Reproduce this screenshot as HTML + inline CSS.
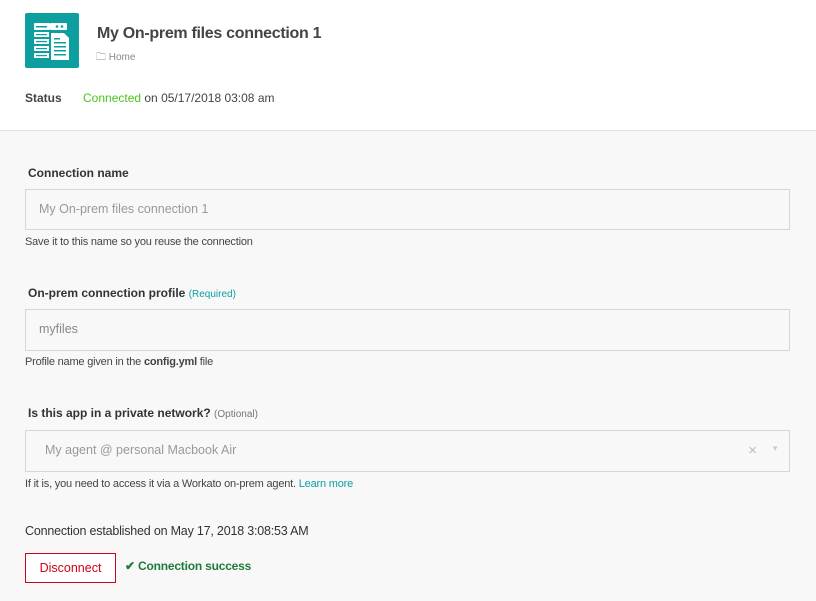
<!DOCTYPE html>
<html><head><style>
body{margin:0;width:816px;height:601px;background:#f8f8f8;font-family:"Liberation Sans",sans-serif;color:#333;position:relative;overflow:hidden}
.top{position:absolute;left:0;top:0;width:816px;height:130px;background:#fff;border-bottom:1px solid #e3e3e3}
.abs{position:absolute;white-space:nowrap}
.lbl{font-size:12px;font-weight:bold;color:#333}
.opt{font-size:10px;font-weight:normal;color:#777}
.inp{position:absolute;left:25px;width:765px;height:39px;border:1px solid #d6d6d6;background:#f8f8f8;box-sizing:border-box;font-size:12.5px;color:#999;padding:12px 0 0 13px}
.help{font-size:11px;color:#444}
</style></head><body>
<div class="top">
<div class="abs" style="left:25px;top:13px;width:54px;height:55px;background:#0e9ea0;border-radius:2px">
<svg width="54" height="55" viewBox="0 0 54 55">
<g fill="#fff">
<rect x="9" y="10" width="16" height="7" rx="1"/>
<rect x="9" y="19" width="16" height="5" rx="1"/><rect x="9" y="26" width="16" height="5" rx="1"/><rect x="9" y="33" width="16" height="5" rx="1"/><rect x="9" y="40" width="16" height="5" rx="1"/>
<rect x="25" y="10" width="17" height="7" rx="1"/>
</g>
<g fill="#0e9ea0"><rect x="11" y="13" width="11" height="1.5"/><circle cx="32" cy="13.5" r="1.3"/><circle cx="37" cy="13.5" r="1.3"/>
<rect x="11" y="21" width="11" height="1.2"/><rect x="11" y="28" width="11" height="1.2"/><rect x="11" y="35" width="11" height="1.2"/><rect x="11" y="42" width="11" height="1.2"/>
<path d="M24 18h16l6 6v25H24z"/></g>
<path d="M26 20h13l5 5v22H26z" fill="#fff"/>
<g fill="#0e9ea0"><rect x="29" y="25" width="6" height="1.5"/><rect x="29" y="29" width="12" height="1.5"/><rect x="29" y="33" width="12" height="1.5"/><rect x="29" y="37" width="12" height="1.5"/><rect x="29" y="41" width="12" height="1.5"/></g>
</svg></div>
<div class="abs" style="left:97px;top:25px;font-size:16px;font-weight:bold;color:#444;letter-spacing:-0.3px">My On-prem files connection 1</div>
<div class="abs" style="left:96px;top:50px;font-size:10px;color:#888">&#128448; Home</div>
<div class="abs" style="left:25px;top:91px;font-size:12px;font-weight:bold;color:#444">Status</div>
<div class="abs" style="left:83px;top:91px;font-size:12px;color:#444"><span style="color:#4bc41b">Connected</span> on 05/17/2018 03:08 am</div>
</div>
<div class="abs lbl" style="left:28px;top:166px">Connection name</div>
<div class="inp" style="top:189px;height:41px">My On-prem files connection 1</div>
<div class="abs help" style="left:25px;top:236px;letter-spacing:-0.2px">Save it to this name so you reuse the connection</div>
<div class="abs lbl" style="left:28px;top:286px">On-prem connection profile <span class="opt" style="color:#0e9ea0">(Required)</span></div>
<div class="inp" style="top:309px;height:42px;color:#888">myfiles</div>
<div class="abs help" style="left:25px;top:356px;letter-spacing:-0.2px">Profile name given in the <b>config.yml</b> file</div>
<div class="abs lbl" style="left:28px;top:406px">Is this app in a private network? <span class="opt">(Optional)</span></div>
<div class="inp" style="top:430px;height:42px;padding-left:19px">My agent @ personal Macbook Air<span style="position:absolute;right:32px;top:11px;color:#bbb;font-size:15px">×</span><span style="position:absolute;right:10px;top:13px;color:#ccc;font-size:8px">▼</span></div>
<div class="abs help" style="left:25px;top:478px;letter-spacing:-0.2px">If it is, you need to access it via a Workato on-prem agent. <span style="color:#0e9ea0">Learn more</span></div>
<div class="abs" style="left:25px;top:524px;font-size:12.5px;color:#333;letter-spacing:-0.2px">Connection established on May 17, 2018 3:08:53 AM</div>
<div class="abs" style="left:25px;top:553px;width:91px;height:30px;border:1px solid #d0021b;box-sizing:border-box;background:#fff;color:#d0021b;font-size:12.5px;text-align:center;line-height:28px">Disconnect</div>
<div class="abs" style="left:125px;top:559px;font-size:12px;font-weight:bold;color:#1f7a3a;letter-spacing:-0.2px">✔ Connection success</div>
</body></html>
